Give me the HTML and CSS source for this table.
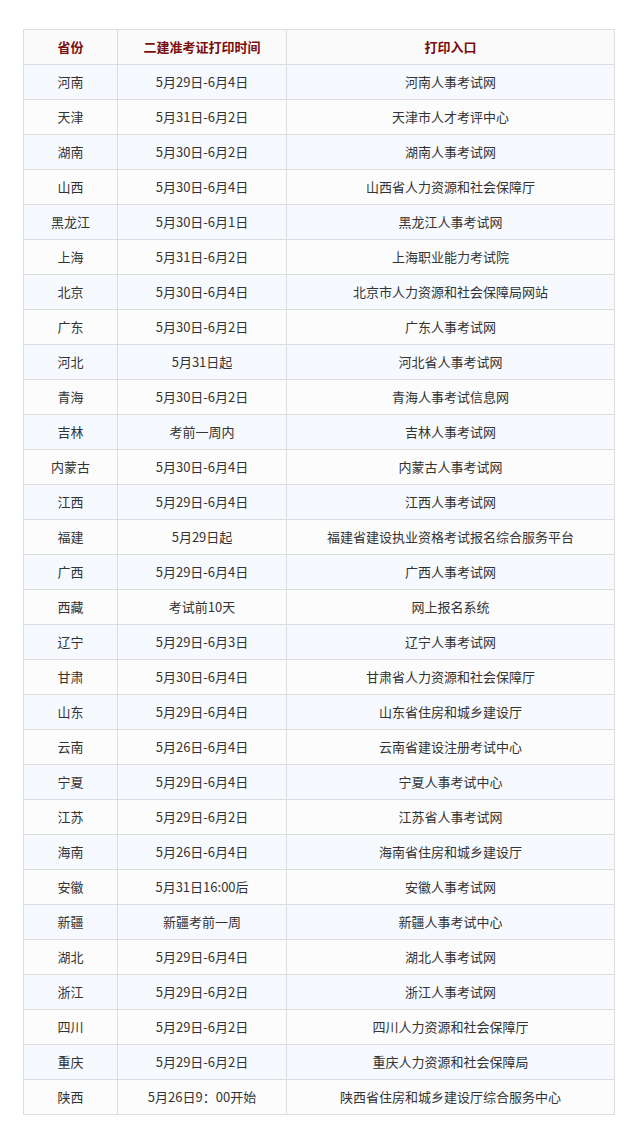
FILE: index.html
```html
<!DOCTYPE html>
<html lang="zh-CN">
<head>
<meta charset="utf-8">
<title>二建准考证打印时间</title>
<link rel="stylesheet" href="styles.css">
</head>
<body>
<table class="grid">
  <colgroup><col class="c1"><col class="c2"><col class="c3"></colgroup>
  <thead>
    <tr><th>省份</th><th>二建准考证打印时间</th><th>打印入口</th></tr>
  </thead>
  <tbody>
    <tr><td>河南</td><td>5月29日-6月4日</td><td>河南人事考试网</td></tr>
    <tr><td>天津</td><td>5月31日-6月2日</td><td>天津市人才考评中心</td></tr>
    <tr><td>湖南</td><td>5月30日-6月2日</td><td>湖南人事考试网</td></tr>
    <tr><td>山西</td><td>5月30日-6月4日</td><td>山西省人力资源和社会保障厅</td></tr>
    <tr><td>黑龙江</td><td>5月30日-6月1日</td><td>黑龙江人事考试网</td></tr>
    <tr><td>上海</td><td>5月31日-6月2日</td><td>上海职业能力考试院</td></tr>
    <tr><td>北京</td><td>5月30日-6月4日</td><td>北京市人力资源和社会保障局网站</td></tr>
    <tr><td>广东</td><td>5月30日-6月2日</td><td>广东人事考试网</td></tr>
    <tr><td>河北</td><td>5月31日起</td><td>河北省人事考试网</td></tr>
    <tr><td>青海</td><td>5月30日-6月2日</td><td>青海人事考试信息网</td></tr>
    <tr><td>吉林</td><td>考前一周内</td><td>吉林人事考试网</td></tr>
    <tr><td>内蒙古</td><td>5月30日-6月4日</td><td>内蒙古人事考试网</td></tr>
    <tr><td>江西</td><td>5月29日-6月4日</td><td>江西人事考试网</td></tr>
    <tr><td>福建</td><td>5月29日起</td><td>福建省建设执业资格考试报名综合服务平台</td></tr>
    <tr><td>广西</td><td>5月29日-6月4日</td><td>广西人事考试网</td></tr>
    <tr><td>西藏</td><td>考试前10天</td><td>网上报名系统</td></tr>
    <tr><td>辽宁</td><td>5月29日-6月3日</td><td>辽宁人事考试网</td></tr>
    <tr><td>甘肃</td><td>5月30日-6月4日</td><td>甘肃省人力资源和社会保障厅</td></tr>
    <tr><td>山东</td><td>5月29日-6月4日</td><td>山东省住房和城乡建设厅</td></tr>
    <tr><td>云南</td><td>5月26日-6月4日</td><td>云南省建设注册考试中心</td></tr>
    <tr><td>宁夏</td><td>5月29日-6月4日</td><td>宁夏人事考试中心</td></tr>
    <tr><td>江苏</td><td>5月29日-6月2日</td><td>江苏省人事考试网</td></tr>
    <tr><td>海南</td><td>5月26日-6月4日</td><td>海南省住房和城乡建设厅</td></tr>
    <tr><td>安徽</td><td>5月31日16:00后</td><td>安徽人事考试网</td></tr>
    <tr><td>新疆</td><td>新疆考前一周</td><td>新疆人事考试中心</td></tr>
    <tr><td>湖北</td><td>5月29日-6月4日</td><td>湖北人事考试网</td></tr>
    <tr><td>浙江</td><td>5月29日-6月2日</td><td>浙江人事考试网</td></tr>
    <tr><td>四川</td><td>5月29日-6月2日</td><td>四川人力资源和社会保障厅</td></tr>
    <tr><td>重庆</td><td>5月29日-6月2日</td><td>重庆人力资源和社会保障局</td></tr>
    <tr><td>陕西</td><td>5月26日9：00开始</td><td>陕西省住房和城乡建设厅综合服务中心</td></tr>
  </tbody>
</table>
</body>
</html>
```

FILE: styles.css
```css
html, body {
  margin: 0;
  padding: 0;
  background: #ffffff;
}
body {
  font-family: "Noto Sans CJK SC", "Noto Sans", sans-serif;
  font-size: 13px;
  color: #333333;
}
.grid {
  border-collapse: collapse;
  margin: 29px 0 0 23px;
  width: 591px;
  table-layout: fixed;
}
.c1 { width: 94px; }
.c2 { width: 169px; }
.c3 { width: 328px; }
.grid th,
.grid td {
  border: 1px solid #dddddd;
  height: 34px;
  padding: 0 4px;
  text-align: center;
  vertical-align: middle;
  line-height: 18px;
  white-space: nowrap;
}
.grid th {
  background: #fafafa;
  color: #7a0d0d;
  font-weight: bold;
}
.grid tbody tr:nth-child(odd) td {
  background: #f6f9fe;
}
.grid tbody tr:nth-child(even) td {
  background: #fcfcfc;
}
```
